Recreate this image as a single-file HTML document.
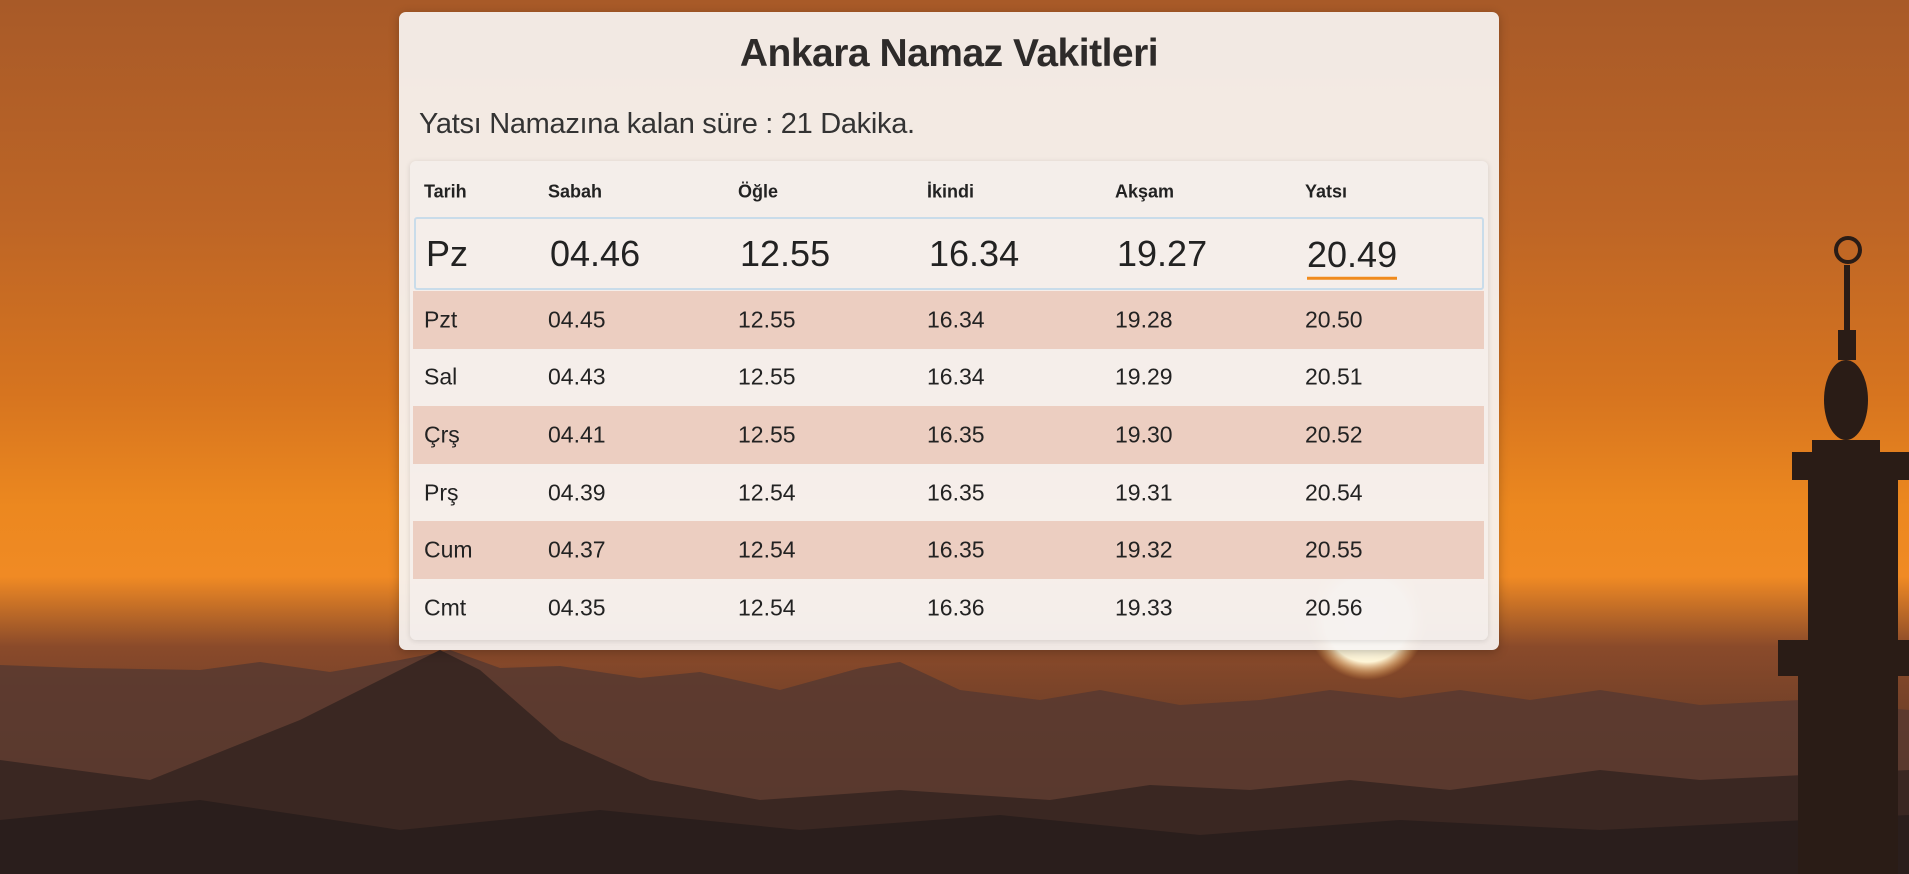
<!DOCTYPE html>
<html><head><meta charset="utf-8"><style>
html,body{margin:0;width:1909px;height:874px;overflow:hidden;font-family:"Liberation Sans",sans-serif;}
.bg{position:absolute;inset:0;background:linear-gradient(180deg,#a85a28 0%,#bd6526 25%,#d6741f 45%,#ec881f 58%,#f08a24 66%,#8a4a2a 74%,#3a2a24 100%);}
.card{position:absolute;left:399px;top:12px;width:1100px;height:638px;background:rgba(247,244,242,0.93);border-radius:7px;box-shadow:0 2px 10px rgba(0,0,0,.25);}
h1{position:absolute;left:0;right:0;top:20px;margin:0;text-align:center;font-size:39px;font-weight:bold;color:#2e2b2a;letter-spacing:-0.5px}
.sub{position:absolute;left:20px;top:96px;font-size:29px;color:#333;letter-spacing:-0.3px}
.tbl{position:absolute;left:11px;top:149px;width:1078px;height:479px;background:rgba(245,240,238,0.6);border-radius:6px;box-shadow:0 1px 6px rgba(0,0,0,.12);}
.row{position:absolute;left:3px;width:1071px;color:#222;}
.row span{position:absolute;top:50%;transform:translateY(-50%);}
.h{top:4px;height:53px;font-size:18px;font-weight:bold;}
.cur{top:56px;height:73px;font-size:36px;border:2px solid #c9dcea;border-radius:3px;box-sizing:border-box;left:4px;width:1070px}
.cur span.u{border-bottom:3px solid #f08a1c;padding-bottom:1px;transform:translateY(-44%)}
.r{height:57.6px;font-size:23px;}
.s{background:rgba(234,200,186,0.85)}
.c1{left:11px}.c2{left:135px}.c3{left:325px}.c4{left:514px}.c5{left:702px}.c6{left:892px}
</style></head><body>
<div class="bg"></div>
<svg style="position:absolute;left:0;top:0" width="1909" height="874">
<defs><radialGradient id="sun" cx="0.5" cy="0.5" r="0.5"><stop offset="0" stop-color="#fffef5"/><stop offset="0.7" stop-color="#fff6d8"/><stop offset="1" stop-color="#ffb050" stop-opacity="0"/></radialGradient></defs>
<circle cx="1367" cy="620" r="60" fill="url(#sun)"/>
<path d="M0 665 L80 668 L200 670 L260 662 L330 672 L400 660 L450 650 L500 668 L560 666 L640 678 L700 672 L780 690 L860 668 L900 662 L960 690 L1040 700 L1100 690 L1180 705 L1260 700 L1330 690 L1400 698 L1460 690 L1530 700 L1600 690 L1700 705 L1800 700 L1909 710 L1909 874 L0 874Z" fill="#5a3a30" opacity="0.9"/>
<path d="M0 760 L150 780 L300 720 L380 680 L440 650 L480 670 L560 740 L650 780 L760 800 L900 790 L1050 800 L1150 785 L1250 790 L1350 780 L1450 790 L1600 770 L1700 780 L1909 770 L1909 874 L0 874Z" fill="#3a2722"/>
<path d="M0 820 L200 800 L400 830 L600 810 L800 830 L1000 815 L1200 835 L1400 820 L1600 830 L1909 815 L1909 874 L0 874Z" fill="#2a1e1c"/>
<g fill="#2a1c16">
<rect x="1844" y="265" width="6" height="70"/><rect x="1838" y="330" width="18" height="30"/><ellipse cx="1846" cy="400" rx="22" ry="40"/>
<rect x="1812" y="440" width="68" height="20"/><rect x="1792" y="452" width="117" height="28"/>
<rect x="1808" y="480" width="90" height="160"/><rect x="1778" y="640" width="131" height="36"/><rect x="1798" y="676" width="100" height="198"/>
<circle cx="1848" cy="250" r="12" fill="none" stroke="#2a1c16" stroke-width="4"/>
</g>
</svg>
<div class="card">
<h1>Ankara Namaz Vakitleri</h1>
<div class="sub">Yatsı Namazına kalan süre : 21 Dakika.</div>
<div class="tbl">
<div class="row h"><span class="c1">Tarih</span><span class="c2">Sabah</span><span class="c3">Öğle</span><span class="c4">İkindi</span><span class="c5">Akşam</span><span class="c6">Yatsı</span></div>
<div class="row cur"><span class="c1" style="left:10px">Pz</span><span class="c2" style="left:134px">04.46</span><span class="c3" style="left:324px">12.55</span><span class="c4" style="left:513px">16.34</span><span class="c5" style="left:701px">19.27</span><span class="c6 u" style="left:891px">20.49</span></div>
<div class="row r s" style="top:130px"><span class="c1">Pzt</span><span class="c2">04.45</span><span class="c3">12.55</span><span class="c4">16.34</span><span class="c5">19.28</span><span class="c6">20.50</span></div>
<div class="row r" style="top:187.6px"><span class="c1">Sal</span><span class="c2">04.43</span><span class="c3">12.55</span><span class="c4">16.34</span><span class="c5">19.29</span><span class="c6">20.51</span></div>
<div class="row r s" style="top:245.2px"><span class="c1">Çrş</span><span class="c2">04.41</span><span class="c3">12.55</span><span class="c4">16.35</span><span class="c5">19.30</span><span class="c6">20.52</span></div>
<div class="row r" style="top:302.8px"><span class="c1">Prş</span><span class="c2">04.39</span><span class="c3">12.54</span><span class="c4">16.35</span><span class="c5">19.31</span><span class="c6">20.54</span></div>
<div class="row r s" style="top:360.4px"><span class="c1">Cum</span><span class="c2">04.37</span><span class="c3">12.54</span><span class="c4">16.35</span><span class="c5">19.32</span><span class="c6">20.55</span></div>
<div class="row r" style="top:418px"><span class="c1">Cmt</span><span class="c2">04.35</span><span class="c3">12.54</span><span class="c4">16.36</span><span class="c5">19.33</span><span class="c6">20.56</span></div>
</div>
</div>
</body></html>
